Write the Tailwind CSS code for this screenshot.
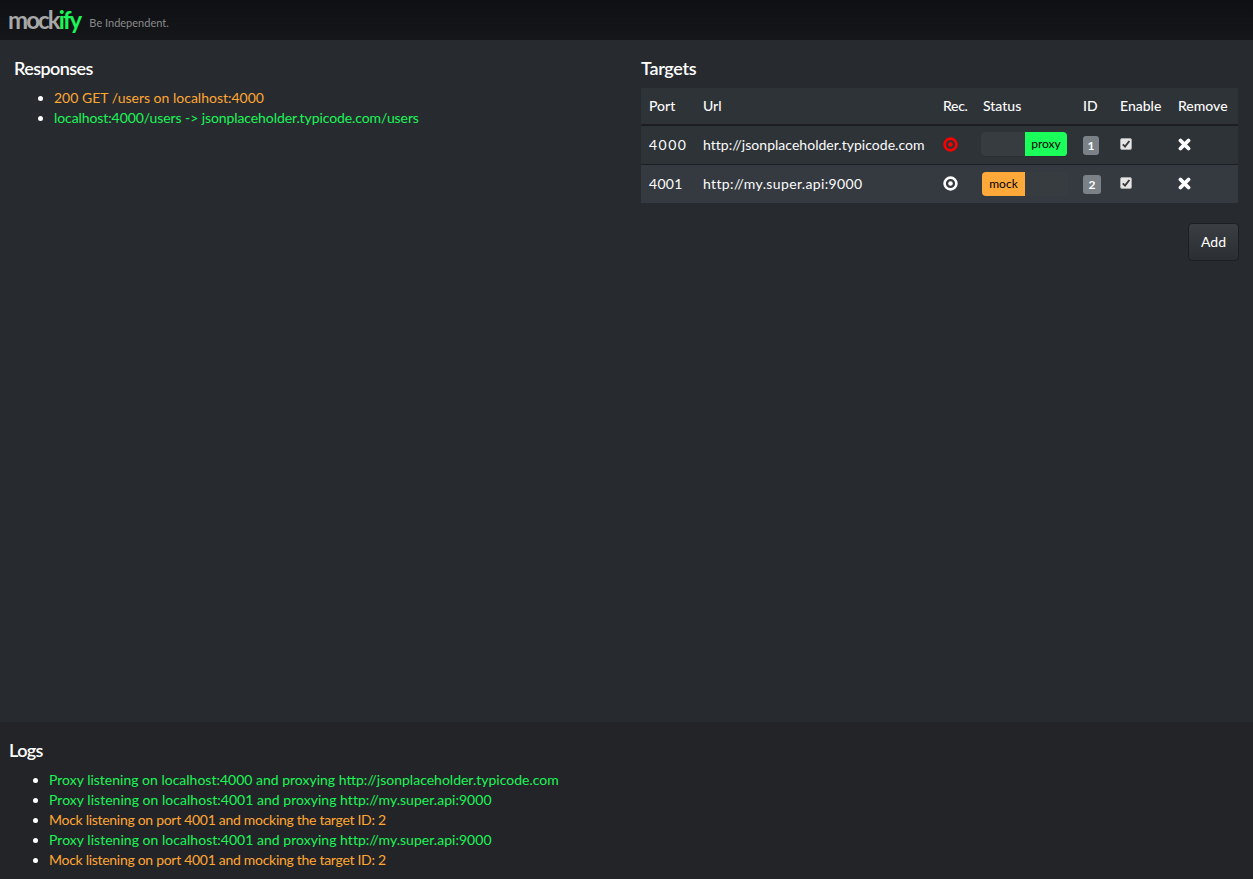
<!DOCTYPE html>
<html lang="en">
<head>
  <meta charset="UTF-8" />
  <title>Mockify</title>
  <script src="https://cdn.jsdelivr.net/npm/@tailwindcss/browser@4"></script>
</head>
<body class="h-[879px] overflow-hidden flex flex-col bg-[#272b30] text-[#fcfcfc] font-['Lato',sans-serif] text-[14px] leading-[20px]">
  <header class="h-10 shrink-0 flex items-center pl-2 bg-gradient-to-b from-[#0f1013] to-[#14161a]">
    <span class="text-[24px] leading-[24px] font-bold text-[#a8a8a8] tracking-[-1.9px]">mock<span class="text-[#1bf557]">ify</span></span>
    <span class="ml-[9px] mt-[6px] text-[11px] leading-[14px] text-[#8a8a8a]">Be Independent.</span>
  </header>

  <main class="flex-1 flex">
    <section class="w-[627px] pl-[14px] pt-[18px]">
      <h2 class="text-[18px] leading-[20px] font-semibold text-white tracking-[-0.6px]">Responses</h2>
      <ul class="mt-[10px] pl-[40px] list-disc marker:text-white">
        <li class="text-[#ffa733]">200 GET /users on localhost:4000</li>
        <li class="text-[#1bf557] tracking-[-0.09px]">localhost:4000/users -&gt; jsonplaceholder.typicode.com/users</li>
      </ul>
    </section>

    <section class="flex-1 pl-[14px] pr-[14px] pt-[18px]">
      <h2 class="text-[18px] leading-[20px] font-semibold text-white tracking-[-0.3px]">Targets</h2>
      <table class="mt-[10px] w-[597px] border-collapse table-fixed">
        <thead>
          <tr class="h-[37px] bg-[#2e3338] border-b-2 border-[#1c1e22] text-left">
            <th class="w-[54px] pl-2 font-medium">Port</th>
            <th class="w-[240px] pl-2 font-medium">Url</th>
            <th class="w-[40px] pl-2 font-medium tracking-[-0.3px]">Rec.</th>
            <th class="w-[100px] pl-2 font-medium">Status</th>
            <th class="w-[37px] pl-2 font-medium">ID</th>
            <th class="w-[58px] pl-2 font-medium">Enable</th>
            <th class="pl-2 font-medium">Remove</th>
          </tr>
        </thead>
        <tbody>
          <tr class="h-[39px] bg-[#2e3338] border-b border-[#1c1e22]">
            <td class="pl-2 tracking-[1.5px]">4000</td>
            <td class="pl-2 tracking-[0.03px]">http://jsonplaceholder.typicode.com</td>
            <td class="pl-2">
              <svg class="w-[15px] h-[15px]" viewBox="0 0 15 15"><circle cx="7.5" cy="7.5" r="5.9" fill="none" stroke="#ff0000" stroke-width="2.6"/><circle cx="7.5" cy="7.5" r="2.3" fill="#ff0000"/></svg>
            </td>
            <td class="pl-2">
              <div class="w-[86px] h-[25px] -ml-[2px] flex rounded-[4px] bg-[#373c41] shadow-[inset_0_-1px_0_#2a2e32] overflow-hidden text-[12px]">
                <span class="flex-1"></span>
                <span class="w-[42px] h-[24px] flex items-center justify-center rounded-r-[3px] bg-[#1bff5a] text-black">proxy</span>
              </div>
            </td>
            <td class="pl-2"><span class="inline-flex w-[16px] h-[19px] items-center justify-center rounded-[3px] bg-[#7a8288] text-[12px] font-bold text-white">1</span></td>
            <td class="pl-2">
              <label class="block w-3 h-3 -mt-px">
                <input type="checkbox" checked class="sr-only" />
                <svg class="block w-3 h-3" viewBox="0 0 12 12"><rect x="0.5" y="0.5" width="11" height="11" rx="1.5" fill="#e6e6e6" stroke="#a8a8a8"/><path d="M2.8 6.4L5 8.6L9.4 3" fill="none" stroke="#3c3c3c" stroke-width="2"/></svg>
              </label>
            </td>
            <td class="pl-2">
              <svg class="w-[13px] h-[13px]" viewBox="0 0 13 13"><path d="M2.5 2.5L10.5 10.5M10.5 2.5L2.5 10.5" stroke="#fff" stroke-width="3.8" stroke-linecap="round"/></svg>
            </td>
          </tr>
          <tr class="h-[39px] bg-[#353a41]">
            <td class="pl-2 tracking-[0.3px]">4001</td>
            <td class="pl-2 tracking-[0.37px]">http://my.super.api:9000</td>
            <td class="pl-2">
              <svg class="w-[15px] h-[15px]" viewBox="0 0 15 15"><circle cx="7.5" cy="7.5" r="5.9" fill="none" stroke="#fff" stroke-width="2.6"/><circle cx="7.5" cy="7.5" r="2.3" fill="#fff"/></svg>
            </td>
            <td class="pl-2">
              <div class="w-[86px] h-[24px] -ml-[1px] flex rounded-[4px] bg-[#373c41] overflow-hidden text-[12px]">
                <span class="w-[43px] flex items-center justify-center bg-[#ffa93a] text-black">mock</span>
                <span class="flex-1"></span>
              </div>
            </td>
            <td class="pl-2"><span class="inline-flex w-[18px] h-[19px] items-center justify-center rounded-[3px] bg-[#7a8288] text-[12px] font-bold text-white">2</span></td>
            <td class="pl-2">
              <label class="block w-3 h-3 -mt-px">
                <input type="checkbox" checked class="sr-only" />
                <svg class="block w-3 h-3" viewBox="0 0 12 12"><rect x="0.5" y="0.5" width="11" height="11" rx="1.5" fill="#e6e6e6" stroke="#a8a8a8"/><path d="M2.8 6.4L5 8.6L9.4 3" fill="none" stroke="#3c3c3c" stroke-width="2"/></svg>
              </label>
            </td>
            <td class="pl-2">
              <svg class="w-[13px] h-[13px]" viewBox="0 0 13 13"><path d="M2.5 2.5L10.5 10.5M10.5 2.5L2.5 10.5" stroke="#fff" stroke-width="3.8" stroke-linecap="round"/></svg>
            </td>
          </tr>
        </tbody>
      </table>
      <div class="mt-5 flex justify-end">
        <button class="w-[51px] h-[38px] rounded-[4px] border border-[#1c1e22] bg-gradient-to-b from-[#3a3f44] to-[#2b2e32] text-white">Add</button>
      </div>
    </section>
  </main>

  <footer class="h-[157px] shrink-0 bg-[#232428] pl-[9px] pt-[18px]">
    <h2 class="text-[18px] leading-[20px] font-semibold text-white tracking-[-0.6px]">Logs</h2>
    <ul class="mt-[10px] pl-[40px] list-disc marker:text-white">
      <li class="text-[#1bf557]">Proxy listening on localhost:4000 and proxying http://jsonplaceholder.typicode.com</li>
      <li class="text-[#1bf557] tracking-[0.03px]">Proxy listening on localhost:4001 and proxying http://my.super.api:9000</li>
      <li class="text-[#ffa733] tracking-[-0.29px]">Mock listening on port 4001 and mocking the target ID: 2</li>
      <li class="text-[#1bf557] tracking-[0.03px]">Proxy listening on localhost:4001 and proxying http://my.super.api:9000</li>
      <li class="text-[#ffa733] tracking-[-0.29px]">Mock listening on port 4001 and mocking the target ID: 2</li>
    </ul>
  </footer>
</body>
</html>
